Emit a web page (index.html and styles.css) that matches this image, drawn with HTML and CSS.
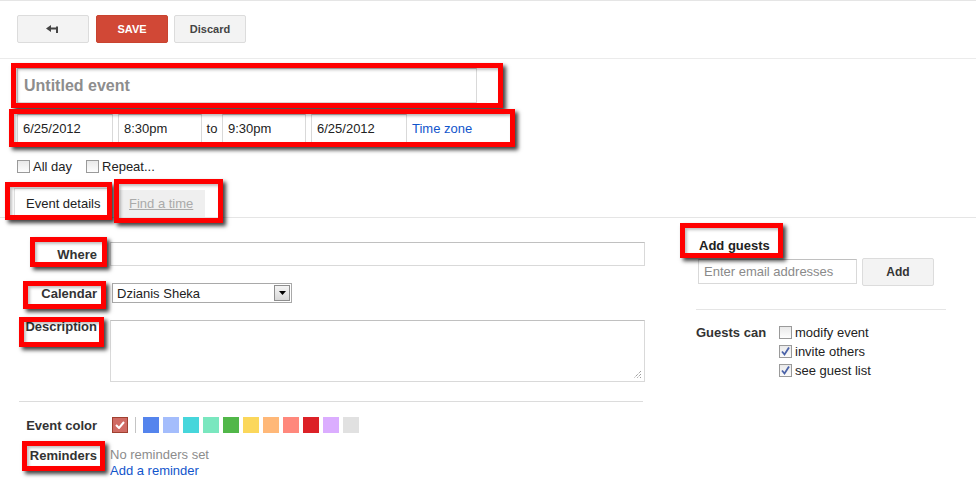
FILE: index.html
```html
<!DOCTYPE html>
<html>
<head>
<meta charset="utf-8">
<link rel="stylesheet" href="styles.css">
</head>
<body>
<div class="topbar">
  <button class="btn btn-back"><svg width="14" height="9" viewBox="0 0 14 9"><path d="M0 3.5 L5 0 L5 2.5 L10 2.5 L10 1.5 L12 1.5 L12 8 L10 8 L10 4.5 L5 4.5 L5 7 Z" fill="#444"/></svg></button>
  <button class="btn btn-save">SAVE</button>
  <button class="btn btn-gray btn-discard">Discard</button>
</div>

<div class="head">
  <input class="title-input" type="text" placeholder="Untitled event">
  <div class="dates">
    <input class="field f-date" type="text" value="6/25/2012">
    <input class="field f-time" type="text" value="8:30pm">
    <span class="to">to</span>
    <input class="field f-time" type="text" value="9:30pm">
    <input class="field f-date" type="text" value="6/25/2012">
    <a class="link tz">Time zone</a>
  </div>
  <div class="checks">
    <label class="chk"><span class="box"></span>All day</label>
    <label class="chk"><span class="box"></span>Repeat...</label>
  </div>
</div>

<div class="tabs">
  <div class="tab tab-active">Event details</div>
  <div class="tab tab-off"><span>Find a time</span></div>
</div>

<div class="main">
  <div class="form">
    <div class="row r-where">
      <div class="lbl">Where</div>
      <input class="field f-where" type="text">
    </div>
    <div class="row r-cal">
      <div class="lbl">Calendar</div>
      <div class="select"><span>Dzianis Sheka</span><span class="sel-btn"><svg width="7" height="4" viewBox="0 0 7 4"><path d="M0 0 H7 L3.5 4 Z" fill="#000"/></svg></span></div>
    </div>
    <div class="row r-desc">
      <div class="lbl lbl-top">Description</div>
      <div class="textarea"><svg class="grip" width="9" height="9" viewBox="0 0 9 9"><path d="M8 1 L1 8 M8 4 L4 8 M8 7 L7 8" stroke="#777" stroke-width="1" stroke-dasharray="1 1"/></svg></div>
    </div>
    <div class="sep"></div>
    <div class="row r-color">
      <div class="lbl">Event color</div>
      <div class="swatches">
        <span class="sw sw-sel"><svg width="10" height="8" viewBox="0 0 10 8"><path d="M1 4 L4 7 L9 1" stroke="#fff" stroke-width="2" fill="none"/></svg></span>
        <span class="vbar"></span>
        <span class="sw" style="background:#5484ed"></span>
        <span class="sw" style="background:#a4bdfc"></span>
        <span class="sw" style="background:#46d6db"></span>
        <span class="sw" style="background:#7ae7bf"></span>
        <span class="sw" style="background:#51b749"></span>
        <span class="sw" style="background:#fbd75b"></span>
        <span class="sw" style="background:#ffb878"></span>
        <span class="sw" style="background:#ff887c"></span>
        <span class="sw" style="background:#dc2127"></span>
        <span class="sw" style="background:#dbadff"></span>
        <span class="sw" style="background:#e1e1e1"></span>
      </div>
    </div>
    <div class="row r-rem">
      <div class="lbl lbl-top">Reminders</div>
      <div class="rem">
        <div class="muted">No reminders set</div>
        <a class="link">Add a reminder</a>
      </div>
    </div>
  </div>

  <div class="side">
    <div class="side-title">Add guests</div>
    <div class="guest-row">
      <input class="field f-email" type="text" placeholder="Enter email addresses">
      <button class="btn btn-gray btn-add">Add</button>
    </div>
    <div class="side-sep"></div>
    <div class="perm">
      <div class="perm-lbl">Guests can</div>
      <div class="perm-list">
        <label class="chk"><span class="box"></span>modify event</label>
        <label class="chk"><span class="box on"><svg width="11" height="11" viewBox="0 0 11 11"><path d="M2 5.5 L4.5 8.5 L9 1.5" stroke="#4a62a8" stroke-width="1.8" fill="none"/></svg></span>invite others</label>
        <label class="chk"><span class="box on"><svg width="11" height="11" viewBox="0 0 11 11"><path d="M2 5.5 L4.5 8.5 L9 1.5" stroke="#4a62a8" stroke-width="1.8" fill="none"/></svg></span>see guest list</label>
      </div>
    </div>
  </div>
</div>

<div class="mark m-title"></div>
<div class="mark m-dates"></div>
<div class="mark m-tab1"></div>
<div class="mark m-tab2"></div>
<div class="mark m-where"></div>
<div class="mark m-cal"></div>
<div class="mark m-desc"></div>
<div class="mark m-rem"></div>
<div class="mark m-guests"></div>
</body>
</html>
```

FILE: styles.css
```css
* { box-sizing: border-box; }
html, body { margin: 0; padding: 0; background: #fff; }
body {
  font-family: "Liberation Sans", Arial, sans-serif;
  font-size: 13px;
  color: #222;
  width: 976px;
  height: 485px;
  overflow: hidden;
  position: relative;
}
button, input { font-family: inherit; }

.topbar {
  border-top: 1px solid #e5e5e5;
  border-bottom: 1px solid #ebebeb;
  height: 59px;
  padding: 14px 0 0 17px;
  display: flex;
  gap: 7px;
}
.btn {
  height: 28px;
  width: 72px;
  border-radius: 2px;
  border: 1px solid #dcdcdc;
  background: #f3f3f3;
  font-size: 11px;
  font-weight: bold;
  color: #444;
  padding: 0;
  display: flex;
  align-items: center;
  justify-content: center;
}
.btn-save {
  background: #d14836;
  border-color: #c9432f;
  color: #fff;
}
.btn-discard { margin-left: -1px; }

.head { padding: 9px 0 0 17px; }
.title-input {
  display: block;
  width: 460px;
  height: 35px;
  border: 1px solid #d9d9d9;
  border-top-color: #c0c0c0;
  padding: 0 6px;
  font-size: 16px;
  font-weight: bold;
  outline: none;
}
.title-input::placeholder { color: #8d8d8d; opacity: 1; }

.dates {
  display: flex;
  align-items: center;
  margin-top: 11px;
  height: 29px;
}
.field {
  height: 29px;
  border: 1px solid #d9d9d9;
  border-top-color: #c0c0c0;
  font-size: 13px;
  color: #222;
  padding: 0 5px;
  outline: none;
}
.f-date { width: 96px; }
.f-time { width: 84px; margin-left: 5px; }
.dates .f-time + .to + .f-time { margin-left: 0; }
.to { width: 20px; text-align: center; }
.dates .f-time + .f-date { margin-left: 5px; }
.link { color: #1155cc; cursor: pointer; }
.tz { margin-left: 5px; }

.checks {
  display: flex;
  gap: 14px;
  margin-top: 15px;
  height: 16px;
  align-items: center;
}
.chk {
  display: flex;
  align-items: center;
  gap: 3px;
  height: 19px;
  color: #222;
  white-space: nowrap;
}
.box {
  width: 13px;
  height: 13px;
  border: 1px solid #9a9a9a;
  background: linear-gradient(#e9e9e9, #fdfdfd);
  display: inline-flex;
  align-items: center;
  justify-content: center;
  flex: none;
}
.box.on { background: linear-gradient(#eaeaea, #fafafa); }
.box svg { display: block; }

.tabs {
  margin-top: 13px;
  border-bottom: 1px solid #e5e5e5;
  height: 31px;
  display: flex;
  align-items: flex-end;
  padding-left: 14px;
  gap: 8px;
}
.tab {
  height: 30px;
  display: flex;
  align-items: center;
  white-space: nowrap;
}
.tab-active {
  background: #fff;
  border: 1px solid #e0e0e0;
  border-bottom: none;
  width: 97px;
  height: 30px;
  margin-bottom: -1px;
  padding: 0 0 0 11px;
}
.tab-off {
  background: #efefef;
  width: 86px;
  height: 27px;
  color: #aaa;
  padding-left: 10px;
}
.tab-off span { text-decoration: underline; }

.main { display: flex; }
.form { width: 696px; padding-top: 24px; }
.row { display: flex; }
.lbl {
  width: 97px;
  text-align: right;
  font-weight: bold;
  color: #333;
  margin-right: 13px;
  flex: none;
  align-self: center;
}
.lbl-top { align-self: flex-start; }
.f-where { width: 535px; height: 24px; }
.r-cal { margin-top: 17px; }
.select {
  margin-left: 2px;
  width: 180px;
  height: 20px;
  border: 1px solid #a9a9a9;
  display: flex;
  align-items: center;
  justify-content: space-between;
  padding-left: 4px;
  font-size: 13px;
}
.sel-btn {
  width: 16px;
  height: 16px;
  margin-right: 1px;
  border: 1px solid #8e8e8e;
  background: linear-gradient(#f4f4f4, #d8d8d8);
  display: flex;
  align-items: center;
  justify-content: center;
}
.r-desc { margin-top: 17px; }
.r-desc .lbl { line-height: 13px; }
.textarea {
  width: 535px;
  height: 62px;
  border: 1px solid #d9d9d9;
  border-top-color: #c0c0c0;
  position: relative;
}
.grip { position: absolute; right: 2px; bottom: 2px; }
.sep {
  margin: 19px 0 0 19px;
  width: 624px;
  height: 1px;
  background: #dcdcdc;
}
.r-color { margin-top: 15px; height: 16px; }
.swatches { display: flex; align-items: center; gap: 4px; margin-left: 2px; }
.sw { width: 16px; height: 16px; display: inline-block; }
.sw-sel {
  background: #d06b64;
  border: 1px solid #a04030;
  display: flex;
  align-items: center;
  justify-content: center;
}
.vbar { width: 1px; height: 16px; background: #c4c4c4; margin: 0 3px; }
.r-rem { margin-top: 13px; }
.r-rem .lbl { margin-top: 2px; }
.rem { line-height: 16px; margin-top: 1px; }
.muted { color: #8c8c8c; }

.side { width: 250px; padding-top: 20px; }
.side-title { font-weight: bold; color: #222; line-height: 16px; padding-left: 3px; }
.guest-row { display: flex; gap: 5px; margin-top: 4px; padding-left: 2px; align-items: flex-start; }
.f-email { width: 159px; height: 25px; margin-top: 1px; }
.f-email::placeholder { color: #8a8a8a; opacity: 1; }
.btn-add { width: 72px; height: 28px; font-size: 12px; color: #333; }
.side-sep { height: 1px; background: #e5e5e5; margin-top: 23px; }
.perm { display: flex; margin-top: 13px; }
.perm-lbl { width: 83px; font-weight: bold; color: #333; line-height: 19px; }
.perm-list { display: flex; flex-direction: column; }

.mark {
  position: absolute;
  border: 5px solid #ff0000;
  box-shadow: 3px 3px 4px rgba(0,0,0,0.75), inset 2px 2px 3px rgba(0,0,0,0.25);
  pointer-events: none;
}
.m-title { left: 11px; top: 63px; width: 492px; height: 45px; }
.m-dates { left: 9px; top: 109px; width: 506px; height: 38px; }
.m-tab1 { left: 5px; top: 182px; width: 107px; height: 38px; }
.m-tab2 { left: 114px; top: 179px; width: 109px; height: 44px; }
.m-where { left: 30px; top: 237px; width: 77px; height: 30px; }
.m-cal { left: 23px; top: 281px; width: 83px; height: 28px; }
.m-desc { left: 19px; top: 317px; width: 85px; height: 30px; }
.m-rem { left: 22px; top: 441px; width: 83px; height: 30px; }
.m-guests { left: 680px; top: 223px; width: 103px; height: 35px; }
```
